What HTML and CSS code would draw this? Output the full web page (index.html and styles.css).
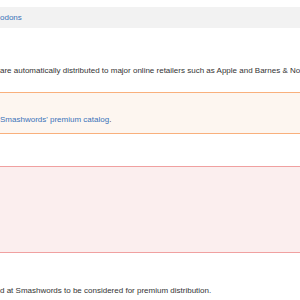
FILE: index.html
```html
<!DOCTYPE html>
<html>
<head>
<meta charset="utf-8">
<link rel="stylesheet" href="styles.css">
</head>
<body>
<div class="page">
  <div class="tabbar"><a class="link" href="#">odons</a></div>
  <p class="line first">are automatically distributed to major online retailers such as Apple and Barnes &amp; Noble, and the other retailers in the catalog</p>
  <div class="notice warn"><a class="link" href="#">Smashwords' premium catalog</a>.</div>
  <div class="notice error"></div>
  <p class="line last">d at Smashwords to be considered for premium distribution.</p>
</div>
</body>
</html>
```
FILE: styles.css
```css
html, body {
  margin: 0;
  padding: 0;
  background: #ffffff;
}
.page {
  width: 300px;
  overflow: hidden;
  font-family: "Liberation Sans", Arial, sans-serif;
  font-size: 8px;
  line-height: 10px;
  color: #333333;
}
.link {
  color: #3b72b9;
  text-decoration: none;
}
.tabbar {
  margin-top: 7px;
  height: 21px;
  line-height: 21px;
  background: #f2f2f2;
  white-space: nowrap;
}
.line {
  margin: 0;
  white-space: nowrap;
}
.first {
  margin-top: 38px;
}
.notice {
  white-space: nowrap;
}
.warn {
  margin-top: 16px;
  padding: 22px 0 8px;
  background: #fdf6f0;
  border-top: 1px solid #f9b07c;
  border-bottom: 1px solid #f9b07c;
}
.error {
  margin-top: 32px;
  height: 85px;
  background: #fbeeee;
  border-top: 1px solid #f0a0a0;
  border-bottom: 1px solid #f0a0a0;
}
.last {
  margin-top: 33px;
}
```
